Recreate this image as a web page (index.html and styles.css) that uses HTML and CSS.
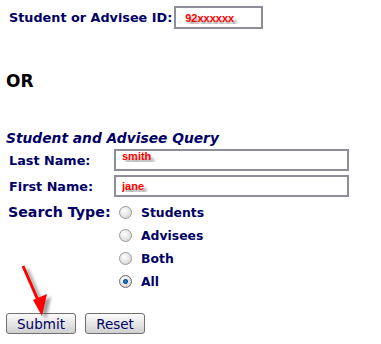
FILE: index.html
```html
<!doctype html>
<html lang="en">
<head>
	<meta charset="UTF-8">
	<title>Student and Advisee Query</title>
	<link rel="stylesheet" href="styles.css">
</head>
<body>

	<form id="queryForm" action="javascript:void(0);" method="get">

		<div class="idRow">
			<label for="studentID">Student or Advisee ID:</label>
			<input type="text" class="field idField" id="studentID" value="92xxxxxx">
		</div>

		<p class="orText">OR</p>

		<p class="panelTitle">Student and Advisee Query</p>

		<div class="queryGrid">
			<label class="fieldLabel" for="lastID">Last Name:</label>
			<input type="text" class="field nameField raised" id="lastID" value="smith">

			<label class="fieldLabel" for="firstID">First Name:</label>
			<input type="text" class="field nameField" id="firstID" value="jane">

			<span class="fieldLabel searchLabel">Search Type:</span>
			<div class="radioList">
				<label class="radioRow"><input type="radio" name="searchType"> Students</label>
				<label class="radioRow"><input type="radio" name="searchType"> Advisees</label>
				<label class="radioRow"><input type="radio" name="searchType"> Both</label>
				<label class="radioRow"><input type="radio" name="searchType" checked> All</label>
			</div>
		</div>

		<div class="buttonRow">
			<input type="submit" class="btn submitBtn" value="Submit">
			<input type="reset" class="btn resetBtn" value="Reset">
		</div>

	</form>

	<!-- red pointer drawn over the page -->
	<svg class="pointer" width="60" height="70" viewBox="0 0 60 70">
		<defs>
			<filter id="blur" x="-50%" y="-50%" width="200%" height="200%">
				<feGaussianBlur stdDeviation="1.6"/>
			</filter>
		</defs>
		<g filter="url(#blur)" opacity="0.55" transform="translate(4,3)">
			<line x1="15" y1="3" x2="33" y2="44" stroke="#555" stroke-width="3"/>
			<polygon points="25,37 39,31 34,53" fill="#555"/>
		</g>
		<line x1="15" y1="3" x2="33" y2="44" stroke="#f00" stroke-width="3"/>
		<polygon points="25,37 39,31 34,53" fill="#f00"/>
	</svg>

</body>
</html>
```

FILE: styles.css
```css
html, body {
	margin: 0px;
	padding: 0px;
	background-color: #ffffff;
}
body {
	position: relative;
	font-family: "DejaVu Sans", Verdana, sans-serif;
	color: #000066;
}

#queryForm {
	padding: 6px 0 0 6px;
}

.idRow {
	display: flex;
	align-items: center;
	gap: 2px;
	padding-left: 3px;
}
.idRow label {
	font-size: 12.8px;
	font-weight: bold;
}

/* text fields: grey frame, red bold value with a soft shadow */
.field {
	box-sizing: border-box;
	border: 2px solid #8e8e98;
	background: #ffffff;
	margin: 0;
	padding: 0 0 0 6px;
	font-family: "Liberation Sans", Arial, sans-serif;
	font-weight: bold;
	font-size: 11px;
	color: #ff0000;
	text-shadow: 3px 4px 3px rgba(90, 90, 90, 0.7);
	outline: none;
}
.idField {
	width: 89px;
	height: 23px;
	padding-left: 9px;
}
.nameField {
	width: 235px;
	height: 22px;
}
.raised {
	padding-bottom: 9px;
}

.orText {
	margin: 42px 0 0 0;
	font-size: 17px;
	line-height: 20px;
	font-weight: bold;
	color: #000000;
}

.panelTitle {
	margin: 38px 0 0 0;
	font-size: 13.8px;
	line-height: 18px;
	font-weight: bold;
	font-style: italic;
}

.queryGrid {
	display: grid;
	grid-template-columns: 105px auto;
	row-gap: 4px;
	align-items: center;
	margin-top: 2px;
	padding-left: 3px;
}
.fieldLabel {
	font-size: 12.8px;
	font-weight: bold;
}
.searchLabel {
	align-self: start;
	font-size: 14.2px;
	line-height: 23px;
	margin-left: -1px;
}

.radioList {
	display: flex;
	flex-direction: column;
	margin-left: 5px;
}
.radioRow {
	display: flex;
	align-items: center;
	gap: 9px;
	height: 23px;
	font-size: 12.4px;
	font-weight: bold;
}
.radioRow input {
	appearance: none;
	width: 13px;
	height: 13px;
	margin: 0;
	border-radius: 50%;
	border: 1px solid #9a9a9a;
	background: radial-gradient(circle at 40% 35%, #ffffff 0%, #dcdcdc 70%, #c4c4c4 100%);
	box-sizing: border-box;
}
.radioRow input:checked {
	background:
		radial-gradient(circle at 50% 50%, #1f8fd8 0px, #0a4f9a 2px, transparent 3px),
		radial-gradient(circle at 40% 35%, #ffffff 0%, #dcdcdc 70%, #c4c4c4 100%);
	border-color: #6a6a6a;
}

.buttonRow {
	display: flex;
	gap: 9px;
	margin-top: 20px;
}
.btn {
	box-sizing: border-box;
	height: 21px;
	margin: 0;
	padding: 0;
	border: 1px solid #707070;
	border-radius: 3px;
	background: linear-gradient(#fbfbfb, #e4e4e4 55%, #cfcfcf);
	font-family: "DejaVu Sans", Verdana, sans-serif;
	font-size: 13.5px;
	color: #000066;
}
.submitBtn {
	width: 70px;
}
.resetBtn {
	width: 60px;
}

.pointer {
	position: absolute;
	left: 8px;
	top: 263px;
}
```
